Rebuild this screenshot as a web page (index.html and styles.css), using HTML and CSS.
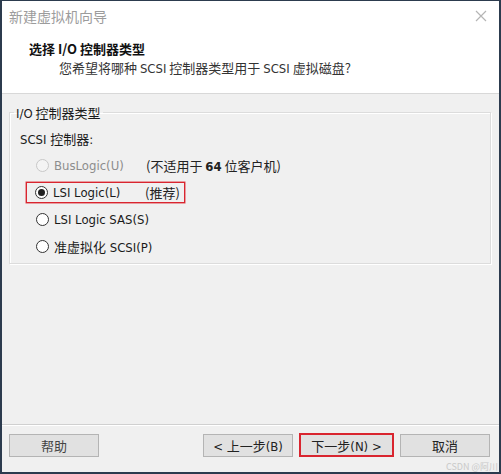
FILE: index.html
```html
<!DOCTYPE html>
<html lang="zh">
<head>
<meta charset="utf-8">
<link rel="stylesheet" href="styles.css">
</head>
<body>
<div class="window">
  <div class="header">
    <div class="titlebar">
      <span class="title">新建虚拟机向导</span>
      <svg class="close" width="12" height="12" viewBox="0 0 12 12"><path d="M1 1L11 11M11 1L1 11" stroke="#b5b5b5" stroke-width="1.2" fill="none"/></svg>
    </div>
    <div class="heading">选择 I/O 控制器类型</div>
    <div class="subheading">您希望将哪种 <span class="lat">SCSI</span> 控制器类型用于 <span class="lat">SCSI</span> 虚拟磁盘?</div>
  </div>
  <div class="content">
    <fieldset class="group">
      <legend><span class="lat">I/O</span> 控制器类型</legend>
      <div class="label">SCSI <span class="cjk">控制器</span>:</div>
      <div class="row disabled">
        <span class="radio"></span><span class="opt fixed">BusLogic(U)</span><span class="note">(不适用于 <b class="num">64</b> 位客户机)</span>
      </div>
      <div class="row">
        <span class="hl"><span class="radio checked"></span><span class="opt fixed">LSI Logic(L)</span><span class="note">(推荐)</span></span>
      </div>
      <div class="row">
        <span class="radio"></span><span class="opt">LSI Logic SAS(S)</span>
      </div>
      <div class="row">
        <span class="radio"></span><span class="opt"><span class="cjk">准虚拟化</span> SCSI(P)</span>
      </div>
    </fieldset>
  </div>
  <div class="footer">
    <button class="btn">帮助</button>
    <div class="spacer"></div>
    <button class="btn">&lt; <span class="cjk">上一步</span>(B)</button>
    <button class="btn next"><span class="cjk">下一步</span>(N) &gt;</button>
    <button class="btn">取消</button>
    <span class="watermark">CSDN @阿川</span>
  </div>
</div>
</body>
</html>
```

FILE: styles.css
```css
html, body {
  margin: 0;
  padding: 0;
  background: #ffffff;
}
body {
  font-family: "DejaVu Sans Condensed", "DejaVu Sans", "Noto Sans CJK SC", sans-serif;
  font-size: 13px;
  color: #1a1a1a;
}
.cjk, .title, .heading, .subheading, .note, legend {
  font-family: "Noto Sans CJK SC", sans-serif;
}
.lat {
  font-family: "DejaVu Sans Condensed", "DejaVu Sans", sans-serif;
}
.window {
  box-sizing: border-box;
  width: 501px;
  height: 474px;
  border: 2px solid #2c3b4e;
  border-top-width: 1px;
  display: flex;
  flex-direction: column;
  position: relative;
  background: #f0f0f0;
}
.header {
  background: #ffffff;
  height: 93px;
  border-bottom: 1px solid #d8d8d8;
  box-sizing: border-box;
}
.titlebar {
  display: flex;
  align-items: center;
  justify-content: space-between;
  height: 30px;
  padding: 0 12px 0 7px;
}
.title {
  color: #9c9c9c;
  font-size: 14px;
}
.heading {
  margin: 9px 0 0 27px;
  font-weight: bold;
  font-size: 13px;
  line-height: 18px;
  color: #111;
}
.subheading {
  margin: 1px 0 0 57px;
  font-size: 13px;
  line-height: 18px;
  color: #333;
}
.content {
  flex: 1;
  padding: 9px 8px 0 7px;
}
.group {
  margin: 0;
  padding: 4px 0 11px 10px;
  border: 1px solid #dcdcdc;
  box-shadow: inset 1px 1px 0 #ffffff, 1px 1px 0 #ffffff;
  height: 161px;
  box-sizing: border-box;
}
legend {
  padding: 0 2px;
  margin-left: -6px;
  font-size: 13px;
  color: #1a1a1a;
}
.label {
  height: 26px;
  line-height: 26px;
}
.row {
  display: flex;
  align-items: center;
  height: 27px;
  padding-left: 16px;
  white-space: nowrap;
}
.hl {
  display: flex;
  align-items: center;
  height: 19px;
  margin-left: -10px;
  padding-left: 8px;
  padding-right: 4px;
  border: 1px solid #d9252f;
  box-shadow: 0 0 0 0.5px #e04850;
}
.radio {
  flex: none;
  box-sizing: border-box;
  width: 13px;
  height: 13px;
  border-radius: 50%;
  border: 1px solid #333;
  background: #fff;
  margin-right: 5px;
  position: relative;
}
.radio.checked::after {
  content: "";
  position: absolute;
  left: 2px;
  top: 2px;
  width: 7px;
  height: 7px;
  border-radius: 50%;
  background: #222;
}
.disabled .radio {
  border-color: #c8c8c8;
  background: #f4f4f4;
}
.disabled .opt {
  color: #8d8d8d;
}
.opt.fixed {
  width: 92px;
}
.note {
  color: #222;
}
.num {
  font-family: "DejaVu Sans Condensed", "DejaVu Sans", sans-serif;
  font-weight: bold;
}
.footer {
  height: 38px;
  border-top: 1px solid #d0d0d0;
  box-shadow: inset 0 1px 0 #ffffff;
  display: flex;
  align-items: flex-start;
  padding: 9px 9px 0 7px;
  gap: 6px;
  position: relative;
}
.spacer {
  flex: 1;
}
.btn {
  box-sizing: border-box;
  width: 90px;
  height: 23px;
  margin: 0;
  padding: 0;
  border: 1px solid #b4b4b4;
  background: #e1e1e1;
  font-size: 13px;
  color: #222;
  font-family: "DejaVu Sans Condensed", "DejaVu Sans", "Noto Sans CJK SC", sans-serif;
}
.btn .cjk {
  font-family: "Noto Sans CJK SC", sans-serif;
}
.btn:first-child {
  font-family: "Noto Sans CJK SC", sans-serif;
  color: #444;
}
.btn.next {
  border: 2px solid #d9252f;
  width: 95px;
  height: 24px;
  margin-top: -1px;
  color: #222;
}
.watermark {
  position: absolute;
  right: 1px;
  bottom: 0px;
  font-size: 9px;
  color: #c9c9c9;
  font-family: "Noto Sans CJK SC", sans-serif;
  line-height: 11px;
}
```
